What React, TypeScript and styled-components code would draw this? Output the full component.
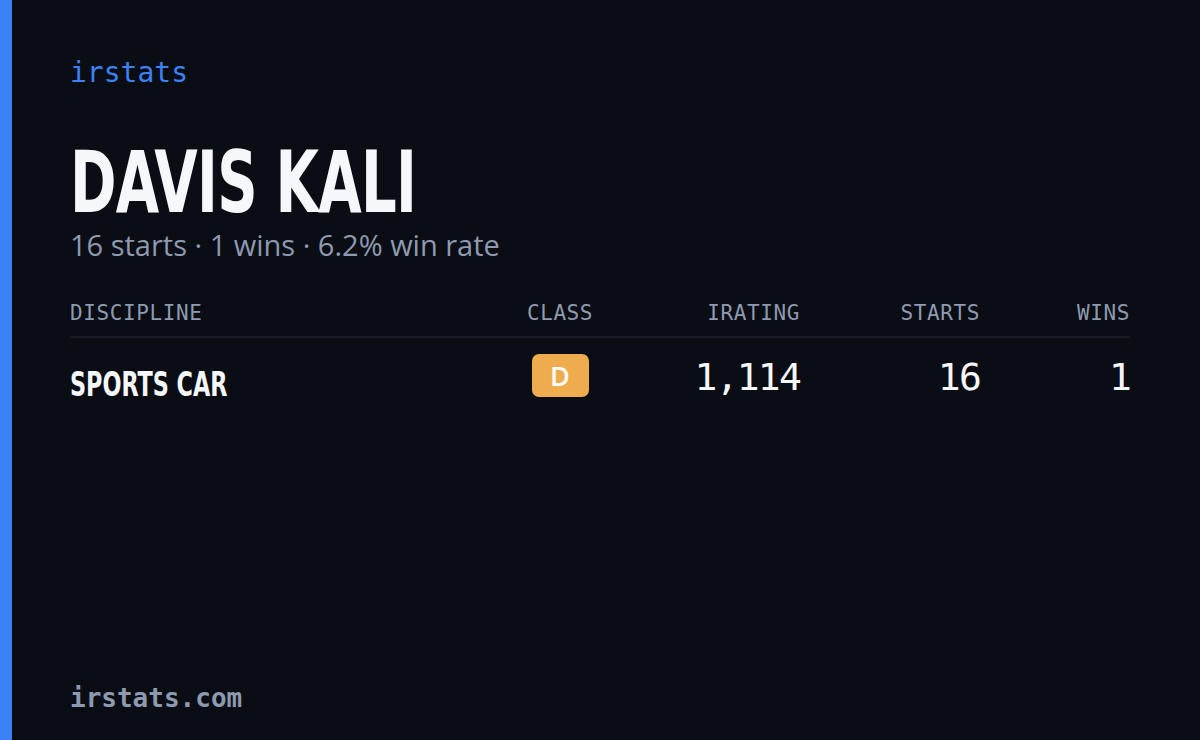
import React from "react";
import styled, { createGlobalStyle } from "styled-components";

const Global = createGlobalStyle`
  html, body { margin: 0; padding: 0; background: #0a0d14; }
  #root { width: 1200px; height: 740px; }
`;

const Card = styled.div`
  width: 1200px;
  height: 740px;
  box-sizing: border-box;
  background: #0a0d14;
  border-left: 12px solid #3b82f6;
  padding: 56px 70px 26px 58px;
  display: flex;
  flex-direction: column;
  overflow: hidden;
`;

const Brand = styled.div`
  font-family: "DejaVu Sans Mono", "Liberation Mono", monospace;
  font-size: 28px;
  line-height: 34px;
  color: #3b82f6;
`;

const Name = styled.h1`
  margin: 50px 0 0;
  font-family: "DejaVu Sans", sans-serif;
  font-stretch: condensed;
  font-weight: 700;
  font-size: 86px;
  line-height: 84px;
  color: #f5f7fb;
  letter-spacing: -1px;
  transform: scaleX(0.725);
  transform-origin: left center;
  white-space: nowrap;
`;

const Sub = styled.div`
  margin-top: 3px;
  font-family: "Open Sans", "Inter", sans-serif;
  font-size: 29px;
  line-height: 36px;
  color: #8d9ab0;
`;

const Table = styled.div`
  margin-top: 36px;
  display: grid;
  grid-template-columns: 1fr 120px 180px 180px 150px;
`;

const Head = styled.div<{ $align: string }>`
  font-family: "DejaVu Sans Mono", "Liberation Mono", monospace;
  font-size: 21px;
  line-height: 28px;
  letter-spacing: 0.6px;
  color: #8d9ab0;
  text-align: ${(p) => p.$align};
  padding-bottom: 9px;
  border-bottom: 2px solid #161b26;
`;

const Cell = styled.div<{ $align: string }>`
  display: flex;
  align-items: center;
  justify-content: ${(p) =>
    p.$align === "right" ? "flex-end" : p.$align === "center" ? "center" : "flex-start"};
  padding-top: 15px;
  height: 44px;
`;

const Discipline = styled.span`
  display: inline-block;
  font-family: "DejaVu Sans", sans-serif;
  font-stretch: condensed;
  font-weight: 700;
  font-size: 34px;
  color: #f5f7fb;
  position: relative;
  top: 9px;
  transform: scaleX(0.73);
  transform-origin: left center;
  white-space: nowrap;
`;

const Badge = styled.span`
  display: inline-flex;
  align-items: center;
  justify-content: center;
  width: 57px;
  height: 43px;
  border-radius: 7px;
  background: #efac4e;
  color: #ffffff;
  font-family: "Open Sans", "Inter", sans-serif;
  font-size: 27px;
  font-weight: 600;
`;

const Num = styled.span`
  font-family: "DejaVu Sans Mono", "Liberation Mono", monospace;
  font-size: 38px;
  letter-spacing: -1.8px;
  font-weight: 500;
  color: #f5f7fb;
  position: relative;
  top: 2px;
`;

const Footer = styled.div`
  margin-top: auto;
  font-family: "DejaVu Sans Mono", "Liberation Mono", monospace;
  font-size: 26px;
  font-weight: 700;
  line-height: 32px;
  color: #8d9ab0;
`;

export default function App() {
  return (
    <>
      <Global />
      <Card>
        <Brand>irstats</Brand>
        <Name>DAVIS KALI</Name>
        <Sub>16 starts · 1 wins · 6.2% win rate</Sub>
        <Table>
          <Head $align="left">DISCIPLINE</Head>
          <Head $align="center">CLASS</Head>
          <Head $align="right">IRATING</Head>
          <Head $align="right">STARTS</Head>
          <Head $align="right">WINS</Head>
          <Cell $align="left">
            <Discipline>SPORTS CAR</Discipline>
          </Cell>
          <Cell $align="center">
            <Badge>D</Badge>
          </Cell>
          <Cell $align="right">
            <Num>1,114</Num>
          </Cell>
          <Cell $align="right">
            <Num>16</Num>
          </Cell>
          <Cell $align="right">
            <Num>1</Num>
          </Cell>
        </Table>
        <Footer>irstats.com</Footer>
      </Card>
    </>
  );
}
